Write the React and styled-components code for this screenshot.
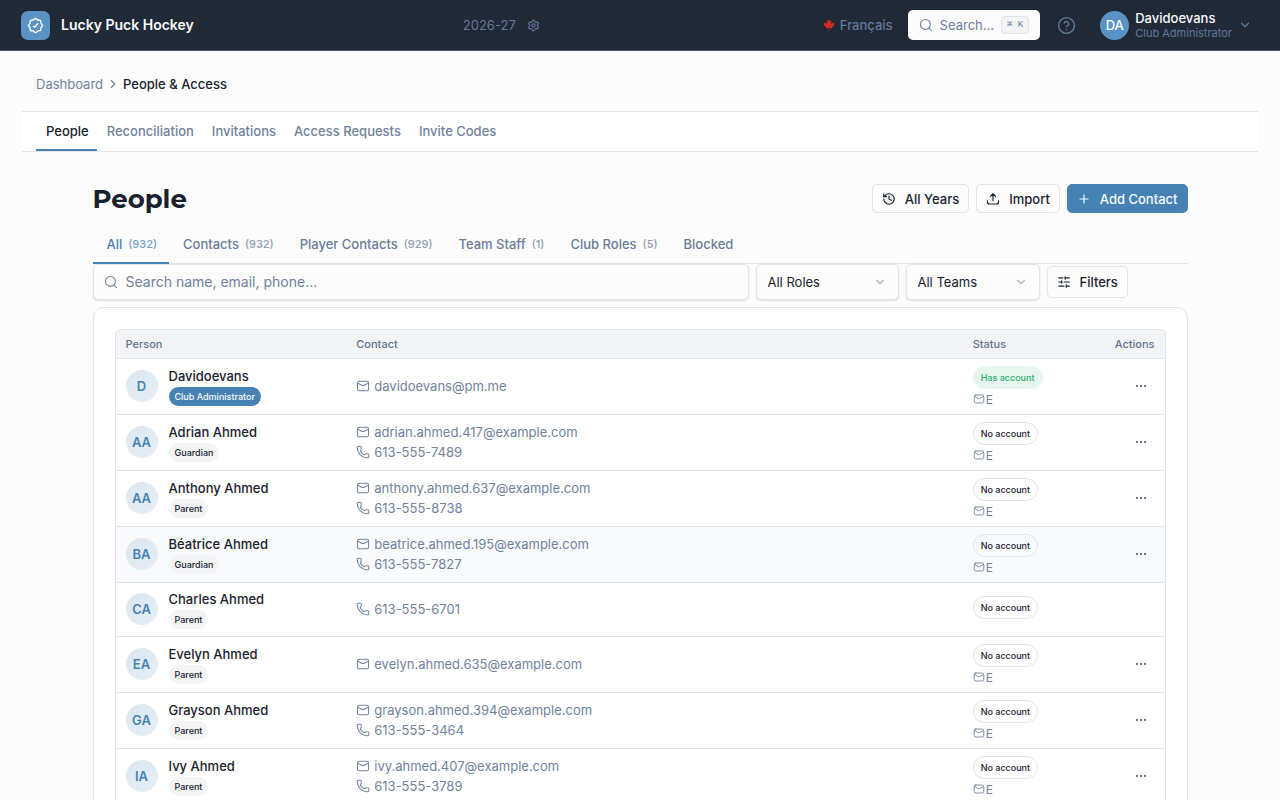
import React from "react";

import styled, { createGlobalStyle } from "styled-components";
import { ChevronDown, ChevronRight, CircleHelp, Ellipsis, History, Phone, Plus, Settings, SlidersHorizontal } from "lucide-react";
import { FaCanadianMapleLeaf } from "react-icons/fa";

const sections = ["People", "Reconciliation", "Invitations", "Access Requests", "Invite Codes"];

const tabs = [
  { label: "All", count: 932 },
  { label: "Contacts", count: 932 },
  { label: "Player Contacts", count: 929 },
  { label: "Team Staff", count: 1 },
  { label: "Club Roles", count: 5 },
  { label: "Blocked" },
];

const people = [
  { initials: "D", name: "Davidoevans", role: "Club Administrator", email: "davidoevans@pm.me", account: true },
  { initials: "AA", name: "Adrian Ahmed", role: "Guardian", email: "adrian.ahmed.417@example.com", phone: "613-555-7489" },
  { initials: "AA", name: "Anthony Ahmed", role: "Parent", email: "anthony.ahmed.637@example.com", phone: "613-555-8738" },
  { initials: "BA", name: "Béatrice Ahmed", role: "Guardian", email: "beatrice.ahmed.195@example.com", phone: "613-555-7827", active: true },
  { initials: "CA", name: "Charles Ahmed", role: "Parent", phone: "613-555-6701" },
  { initials: "EA", name: "Evelyn Ahmed", role: "Parent", email: "evelyn.ahmed.635@example.com" },
  { initials: "GA", name: "Grayson Ahmed", role: "Parent", email: "grayson.ahmed.394@example.com", phone: "613-555-3464" },
  { initials: "IA", name: "Ivy Ahmed", role: "Parent", email: "ivy.ahmed.407@example.com", phone: "613-555-3789" },
];

function Icon({ size = 14, stroke = 1.75, children }) {
  return (
    <svg width={size} height={size} viewBox="0 0 24 24" fill="none" stroke="currentColor"
      strokeWidth={stroke} strokeLinecap="round" strokeLinejoin="round" aria-hidden="true">
      {children}
    </svg>
  );
}

const SearchIcon = (props) => (
  <Icon {...props}>
    <circle cx="11" cy="11" r="8.5" />
    <path d="M17.2 17.2L21.5 21.5" />
  </Icon>
);

const MailIcon = (props) => (
  <Icon {...props}>
    <rect x="2.5" y="4" width="19" height="16" rx="3" />
    <path d="M3 7L8.9 10.4C11.4 11.8 12.6 11.8 15.1 10.4L21 7" />
  </Icon>
);

const UploadIcon = (props) => (
  <Icon {...props}>
    <path d="M12 15V3.5M7.5 7.5L12 3L16.5 7.5" />
    <path d="M2.5 15V17C2.5 19.8 3.2 20.5 6 20.5H18C20.8 20.5 21.5 19.8 21.5 17V15" />
  </Icon>
);

const BadgeIcon = (props) => (
  <Icon {...props}>
    <path d="M18.99 19C18.37 19.62 17.24 19.46 16.45 19.46C15.48 19.46 15.01 19.65 14.32 20.35C13.73 20.94 12.93 22 12 22C11.07 22 10.27 20.94 9.68 20.35C8.99 19.65 8.52 19.46 7.55 19.46C6.76 19.46 5.63 19.62 5.01 19C4.38 18.38 4.54 17.24 4.54 16.45C4.54 15.44 4.32 14.98 3.6 14.26C2.53 13.2 2 12.66 2 12C2 11.34 2.53 10.8 3.6 9.74C4.24 9.1 4.54 8.46 4.54 7.55C4.54 6.76 4.38 5.63 5 5.01C5.62 4.38 6.76 4.54 7.55 4.54C8.46 4.54 9.1 4.24 9.74 3.6C10.8 2.53 11.34 2 12 2C12.66 2 13.2 2.53 14.26 3.6C14.9 4.24 15.54 4.54 16.45 4.54C17.24 4.54 18.37 4.38 18.99 5C19.62 5.62 19.46 6.76 19.46 7.55C19.46 8.56 19.68 9.02 20.4 9.74C21.47 10.8 22 11.34 22 12C22 12.66 21.47 13.2 20.4 14.26C19.68 14.98 19.46 15.44 19.46 16.45C19.46 17.24 19.62 18.38 18.99 19Z" />
    <path d="M9 12.9L10.8 14.5L15 9.5" />
  </Icon>
);

function PersonRow({ person }) {
  return (
    <Row $active={person.active}>
      <td>
        <Person>
          <Avatar>{person.initials}</Avatar>
          <div>
            <Name>{person.name}</Name>
            <Role $primary={person.account}>{person.role}</Role>
          </div>
        </Person>
      </td>
      <td>
        <ContactList>
          {person.email && <ContactLine><MailIcon />{person.email}</ContactLine>}
          {person.phone && <ContactLine><Phone size={14} strokeWidth={1.75} />{person.phone}</ContactLine>}
        </ContactList>
      </td>
      <td>
        <StatusCell>
          <Status $on={person.account}>{person.account ? "Has account" : "No account"}</Status>
          <Channel>{person.email && <><MailIcon size={12} />E</>}</Channel>
        </StatusCell>
      </td>
      <ActionCell>
        {person.email && <MoreButton aria-label={`Actions for ${person.name}`}><Ellipsis size={14} /></MoreButton>}
      </ActionCell>
    </Row>
  );
}

export default function App() {
  return (
    <>
      <GlobalStyle />
      <Header>
        <Brand href="#">
          <Logo><BadgeIcon size={17} stroke={2} /></Logo>
          Lucky Puck Hockey
        </Brand>
        <Season>
          2026-27
          <SeasonButton aria-label="Season settings"><Settings size={13} strokeWidth={2} /></SeasonButton>
        </Season>
        <HeaderActions>
          <Language><FaCanadianMapleLeaf size={12} color="#d52b1e" />Français</Language>
          <QuickSearch>
            <SearchIcon />
            Search...
            <kbd>⌘ K</kbd>
          </QuickSearch>
          <HelpButton aria-label="Help"><CircleHelp size={19} strokeWidth={1.75} /></HelpButton>
          <UserMenu>
            <UserAvatar>DA</UserAvatar>
            <UserText>
              <strong>Davidoevans</strong>
              <small>Club Administrator</small>
            </UserText>
            <ChevronDown size={14} />
          </UserMenu>
        </HeaderActions>
      </Header>

      <Main>
        <Breadcrumb aria-label="Breadcrumb">
          <a href="#">Dashboard</a>
          <ChevronRight size={14} />
          <span aria-current="page">People &amp; Access</span>
        </Breadcrumb>

        <SectionNav>
          {sections.map((name, i) => (
            <SectionLink key={name} href="#" $active={i === 0}>{name}</SectionLink>
          ))}
        </SectionNav>

        <Content>
          <TitleBar>
            <h1>People</h1>
            <ButtonGroup>
              <Button><History size={14} />All Years</Button>
              <Button><UploadIcon stroke={2} />Import</Button>
              <Button $primary><Plus size={14} />Add Contact</Button>
            </ButtonGroup>
          </TitleBar>

          <Tabs>
            {tabs.map((tab, i) => (
              <Tab key={tab.label} $active={i === 0}>
                {tab.label}
                {tab.count && <span>({tab.count})</span>}
              </Tab>
            ))}
          </Tabs>

          <FilterBar>
            <SearchBox>
              <SearchIcon />
              <input type="text" aria-label="Search people" placeholder="Search name, email, phone..." />
            </SearchBox>
            <SelectBox $width="143px">
              <select aria-label="Role"><option>All Roles</option></select>
              <ChevronDown size={14} />
            </SelectBox>
            <SelectBox $width="134px">
              <select aria-label="Team"><option>All Teams</option></select>
              <ChevronDown size={14} />
            </SelectBox>
            <Button><SlidersHorizontal size={14} />Filters</Button>
          </FilterBar>

          <Card>
            <TableFrame>
              <Table>
                <thead>
                  <tr>
                    <th>Person</th>
                    <th>Contact</th>
                    <th>Status</th>
                    <th>Actions</th>
                  </tr>
                </thead>
                <tbody>
                  {people.map((person) => <PersonRow key={person.name} person={person} />)}
                </tbody>
              </Table>
            </TableFrame>
          </Card>
        </Content>
      </Main>
    </>
  );
}

const GlobalStyle = createGlobalStyle`
  * {
    box-sizing: border-box;
  }

  html {
    scrollbar-width: none;
  }

  body {
    margin: 0;
    background-color: #fcfcfd;
    color: #19212e;
    font-family: Inter, "Liberation Sans", sans-serif;
    font-size: 13px;
    line-height: 18px;
  }

  button, input, select {
    font: inherit;
    color: inherit;
  }

  button {
    padding: 0;
    border: 0;
    background: none;
    cursor: pointer;
  }

  a {
    color: inherit;
    text-decoration: none;
  }

  svg {
    flex-shrink: 0;
  }
`;

const Header = styled.header`
  height: 51px;
  padding: 0 21px;

  display: flex;
  align-items: center;

  background-color: #202a37;
  border-bottom: 1px solid #45586e;
  color: #64789a;
`;

const Brand = styled.a`
  display: flex;
  align-items: center;
  gap: 11px;

  color: #f8fafc;
  font-size: 14px;
  font-weight: 600;
`;

const Logo = styled.span`
  width: 29px;
  height: 29px;

  display: flex;
  justify-content: center;
  align-items: center;

  border-radius: 7px;
  background-color: #5a92c3;
`;

const Season = styled.div`
  flex: 1;

  display: flex;
  justify-content: center;
  align-items: center;
  gap: 11px;
`;

const SeasonButton = styled.button`
  display: flex;
`;

const HeaderActions = styled.div`
  display: flex;
  align-items: center;
`;

const Language = styled.button`
  padding: 0 15px 0 14px;

  display: flex;
  align-items: center;
  gap: 5px;

  font-weight: 500;
`;

const QuickSearch = styled.button`
  height: 30px;
  padding: 0 11px;

  display: flex;
  align-items: center;
  gap: 7px;

  border-radius: 5px;
  background-color: #fcfcfd;
  color: #6b7d97;

  kbd {
    height: 18px;
    padding: 0 5px;

    border: 1px solid #dfe4ec;
    border-radius: 4px;
    background-color: #f3f4f6;

    font-family: "Liberation Mono", monospace;
    font-size: 9px;
    line-height: 16px;
  }
`;

const HelpButton = styled.button`
  padding: 0 17px;
  display: flex;
`;

const UserMenu = styled.button`
  padding: 0 7px;

  display: flex;
  align-items: center;
  gap: 6px;

  text-align: left;
`;

const UserAvatar = styled.span`
  width: 29px;
  height: 29px;

  display: flex;
  justify-content: center;
  align-items: center;

  border-radius: 50%;
  background-color: #5a92c3;
  color: #fff;
  font-weight: 500;
`;

const UserText = styled.span`
  display: flex;
  flex-direction: column;

  strong {
    color: #f8fafc;
    font-weight: 500;
    line-height: 16px;
  }

  small {
    font-size: 11px;
    line-height: 15px;
  }
`;

const Main = styled.main`
  padding: 0 22px;
`;

const Breadcrumb = styled.nav`
  height: 60px;
  padding: 6px 14px 0;

  display: flex;
  align-items: center;
  gap: 3px;

  color: #71829b;

  span {
    color: #19212e;
    font-weight: 500;
  }
`;

const SectionNav = styled.nav`
  height: 41px;
  padding: 0 14px;

  display: flex;

  border-top: 1px solid #e2e4e9;
  border-bottom: 1px solid #e2e4e9;
  background-color: #fff;
`;

const SectionLink = styled.a`
  padding: 0 8px 0 10px;

  display: flex;
  align-items: center;

  border-bottom: 2px solid ${(props) => (props.$active ? "#4682b4" : "transparent")};
  color: ${(props) => (props.$active ? "#19212e" : "#71829b")};
  font-weight: 500;
`;

const Content = styled.div`
  max-width: 1095px;
  margin: 0 auto;
  padding: 32px 0;
`;

const TitleBar = styled.div`
  display: flex;
  justify-content: space-between;
  align-items: flex-start;

  h1 {
    margin: 0;
    font-family: Montserrat, Inter, sans-serif;
    font-size: 26px;
    font-weight: 700;
    line-height: 30px;
  }
`;

const ButtonGroup = styled.div`
  display: flex;
  gap: 7px;
`;

const Button = styled.button`
  height: 29px;
  padding: 0 9px;

  display: flex;
  align-items: center;
  gap: 9px;

  border: 1px solid ${(props) => (props.$primary ? "#4682b4" : "#e0e4eb")};
  border-radius: 5px;
  background-color: ${(props) => (props.$primary ? "#4682b4" : "#fcfcfd")};
  color: ${(props) => (props.$primary ? "#f8fafc" : "#19212e")};
  font-weight: 500;
`;

const Tabs = styled.div`
  height: 40px;
  margin-top: 10px;

  display: flex;

  border-bottom: 1px solid #e0e4eb;
`;

const Tab = styled.button`
  height: 40px;
  padding: 2px 12px 0 14px;

  display: flex;
  align-items: center;
  gap: 6px;

  border-bottom: 2px solid ${(props) => (props.$active ? "#4682b4" : "transparent")};
  color: ${(props) => (props.$active ? "#4682b4" : "#6b7d97")};
  font-weight: 500;

  span {
    font-size: 11px;
    opacity: 0.75;
  }
`;

const FilterBar = styled.div`
  display: flex;
  align-items: center;
  gap: 7px;

  ${Button} {
    height: 32px;
  }
`;

const SearchBox = styled.label`
  flex: 1;
  max-width: 656px;
  height: 36px;
  padding: 0 10px;

  display: flex;
  align-items: center;
  gap: 8px;

  border: 1px solid #e0e4eb;
  border-radius: 5px;
  background-color: #fcfcfd;
  box-shadow: 0 1px 2px rgba(25, 33, 46, 0.12);
  color: #71829b;

  input {
    flex: 1;
    min-width: 0;
    padding: 0;

    border: 0;
    outline: 0;
    background: none;
    font-size: 14px;
  }

  input::placeholder {
    color: #71829b;
  }
`;

const SelectBox = styled.div`
  width: ${(props) => props.$width};
  height: 36px;

  display: grid;
  align-items: center;

  border: 1px solid #e0e4eb;
  border-radius: 5px;
  background-color: #fcfcfd;
  box-shadow: 0 1px 2px rgba(25, 33, 46, 0.12);

  select, svg {
    grid-area: 1 / 1;
  }

  select {
    height: 100%;
    padding: 0 11px;

    appearance: none;
    border: 0;
    background: none;
  }

  svg {
    justify-self: end;
    margin-right: 11px;
    color: #a9b4c4;
    pointer-events: none;
  }
`;

const Card = styled.section`
  margin-top: 7px;
  padding: 21px;

  border: 1px solid #e0e4eb;
  border-radius: 11px;
  background-color: #fff;
  box-shadow: 0 1px 2px rgba(25, 33, 46, 0.08);
`;

const TableFrame = styled.div`
  overflow: hidden;
  border: 1px solid #e0e4eb;
  border-radius: 5px;
`;

const Table = styled.table`
  width: 100%;
  table-layout: fixed;
  border-collapse: collapse;

  th {
    height: 28px;
    padding: 0 10px;

    border-bottom: 1px solid #e0e4eb;
    background-color: #f3f4f6;
    color: #64748f;
    font-size: 11px;
    font-weight: 500;
    text-align: left;
  }

  th:nth-child(1) {
    width: 22%;
  }

  th:nth-child(3) {
    width: 12%;
  }

  th:nth-child(4) {
    width: 76px;
    text-align: right;
  }

  td {
    padding: 7px 10px;
  }
`;

const Row = styled.tr`
  border-bottom: 1px solid #e0e4eb;
  background-color: ${(props) => (props.$active ? "#f9fafc" : "#fff")};
`;

const Person = styled.div`
  display: flex;
  align-items: center;
  gap: 11px;
`;

const Avatar = styled.span`
  width: 32px;
  height: 32px;

  display: flex;
  justify-content: center;
  align-items: center;

  border-radius: 50%;
  background-image: linear-gradient(to bottom right, #dae6f0, #e7eff6);
  color: #4682b4;
  font-weight: 600;
`;

const Name = styled.div`
  padding-bottom: 2px;

  font-weight: 500;
`;

const Role = styled.span`
  width: fit-content;
  padding: 0 6px;

  display: block;

  border-radius: 10px;
  background-color: ${(props) => (props.$primary ? "#4682b4" : "#f3f4f6")};
  color: ${(props) => (props.$primary ? "#f8fafc" : "#19212e")};
  font-size: 9px;
  font-weight: 500;
  line-height: 19px;
`;

const ContactList = styled.div`
  display: flex;
  flex-direction: column;
  gap: 2px;
`;

const ContactLine = styled.div`
  display: flex;
  align-items: center;
  gap: 4px;

  color: #71829b;
`;

const StatusCell = styled.div`
  display: flex;
  flex-direction: column;
  gap: 3px;
`;

const Status = styled.span`
  width: fit-content;
  padding: 0 7px;

  border: 1px solid ${(props) => (props.$on ? "#e6f6ee" : "#e0e4eb")};
  border-radius: 12px;
  background-color: ${(props) => (props.$on ? "#e6f6ee" : "transparent")};
  color: ${(props) => (props.$on ? "#27b06e" : "#19212e")};
  font-size: 9px;
  font-weight: 500;
  line-height: 21px;
`;

const Channel = styled.div`
  display: flex;
  align-items: center;
  gap: 1px;

  color: #71829b;
  font-size: 12px;
  line-height: 15px;
`;

const ActionCell = styled.td`
  text-align: right;
`;

const MoreButton = styled.button`
  width: 27px;
  height: 27px;

  display: inline-flex;
  justify-content: center;
  align-items: center;

  color: #64748f;
  vertical-align: middle;
`;
